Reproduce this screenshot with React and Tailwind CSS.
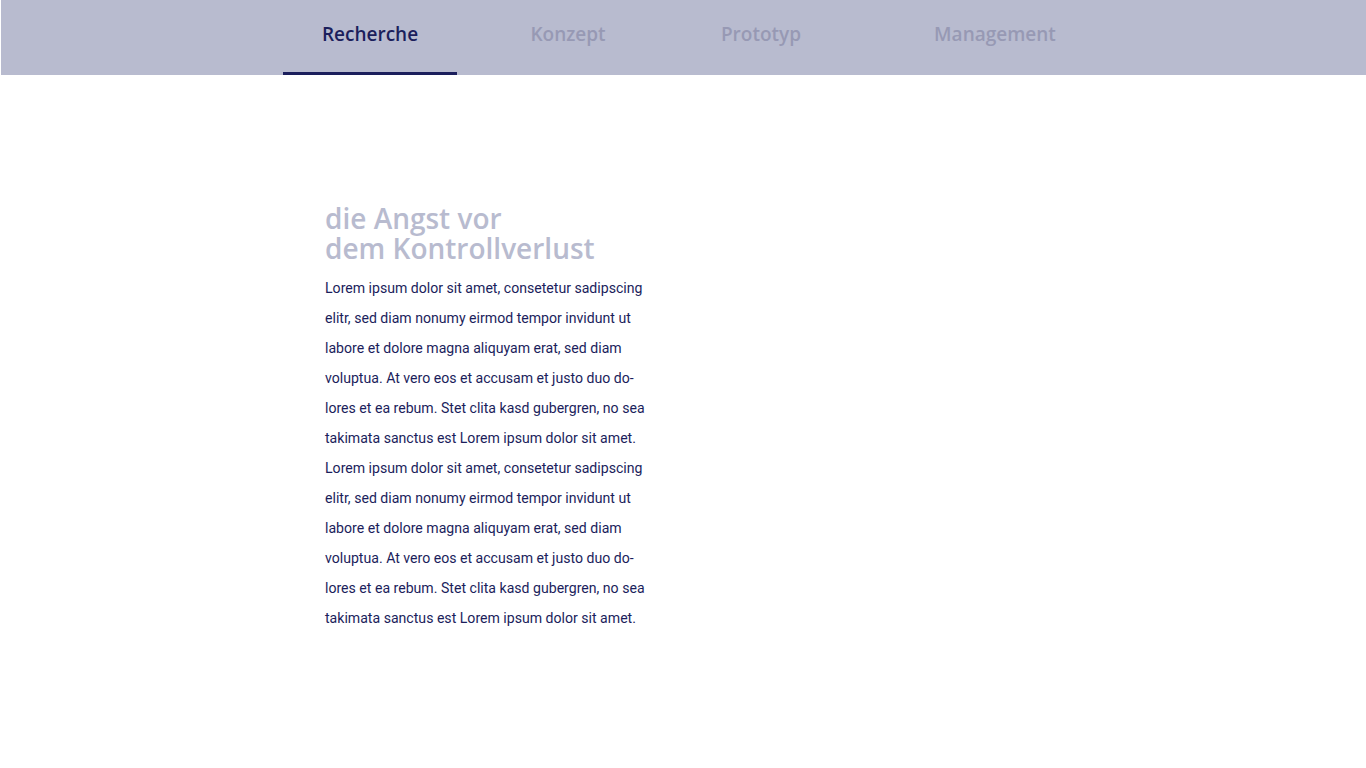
export default function App() {
  const lines = [
    "Lorem ipsum dolor sit amet, consetetur sadipscing",
    "elitr, sed diam nonumy eirmod tempor invidunt ut",
    "labore et dolore magna aliquyam erat, sed diam",
    "voluptua. At vero eos et accusam et justo duo do-",
    "lores et ea rebum. Stet clita kasd gubergren, no sea",
    "takimata sanctus est Lorem ipsum dolor sit amet.",
    "Lorem ipsum dolor sit amet, consetetur sadipscing",
    "elitr, sed diam nonumy eirmod tempor invidunt ut",
    "labore et dolore magna aliquyam erat, sed diam",
    "voluptua. At vero eos et accusam et justo duo do-",
    "lores et ea rebum. Stet clita kasd gubergren, no sea",
    "takimata sanctus est Lorem ipsum dolor sit amet.",
  ];
  const tabs = [
    { label: "Recherche", active: true, cls: "ml-[282px]" },
    { label: "Konzept", active: false, cls: "ml-[24px]" },
    { label: "Prototyp", active: false, cls: "ml-[19px]" },
    { label: "Management", active: false, cls: "ml-[60px]" },
  ];
  return (
    <div className="min-h-[768px] w-full bg-white">
      <nav className="ml-px flex h-[75px] bg-[#b8bbcf]" style={{ fontFamily: "'Open Sans', sans-serif" }}>
        {tabs.map((t) => (
          <div
            key={t.label}
            className={`${t.cls} flex w-[174px] flex-col items-center justify-between`}
          >
            <div
              className={`pt-[20px] text-[19px] font-semibold leading-[28px] ${
                t.active ? "text-[#1b1e5c]" : "text-[#9799b4]"
              }`}
            >
              {t.label}
            </div>
            {t.active ? <div className="h-[3px] w-full bg-[#1b1e5c]" /> : <div />}
          </div>
        ))}
      </nav>
      <main className="pl-[325px] pt-[128px]">
        <h1
          className="text-[28px] font-semibold leading-[30px] text-[#b8bbcf]"
          style={{ fontFamily: "'Open Sans', sans-serif" }}
        >
          die Angst vor
          <br />
          dem Kontrollverlust
        </h1>
        <div
          className="mt-[10px] text-[14.1px] leading-[30px] text-[#1b1e5c]"
          style={{ fontFamily: "Roboto, sans-serif" }}
        >
          {lines.map((l, i) => (
            <div key={i} className="whitespace-nowrap">
              {l}
            </div>
          ))}
        </div>
      </main>
    </div>
  );
}
